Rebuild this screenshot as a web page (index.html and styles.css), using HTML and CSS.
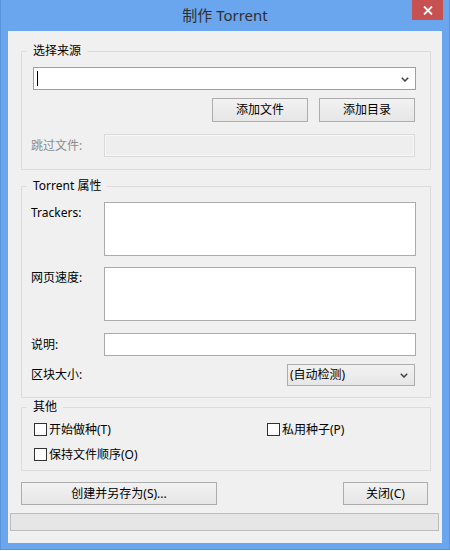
FILE: index.html
```html
<!DOCTYPE html>
<html>
<head>
<meta charset="utf-8">
<title>制作 Torrent</title>
<link rel="stylesheet" href="styles.css">
</head>
<body>
<div class="window">
  <div class="titlebar">
    <div class="title">制作 Torrent</div>
    <div class="close"><svg width="10" height="9" viewBox="0 0 10 9"><path d="M1 0.5 L9 8.5 M9 0.5 L1 8.5" stroke="#fff" stroke-width="1.8" fill="none"/></svg></div>
  </div>
  <div class="client">
    <fieldset class="group g-source">
      <legend>选择来源</legend>
      <div class="combo"><span class="caret"></span><svg class="arrow" width="8" height="5" viewBox="0 0 8 5"><path d="M0.8 0.8 L4 4 L7.2 0.8" stroke="#404040" stroke-width="1.5" fill="none"/></svg></div>
      <div class="btn-row"><button class="btn btn-add">添加文件</button><button class="btn btn-add">添加目录</button></div>
      <div class="field-row skip"><span class="label disabled">跳过文件:</span><div class="textbox disabled-box"></div></div>
    </fieldset>

    <fieldset class="group g-props">
      <legend>Torrent 属性</legend>
      <div class="field-row top"><span class="label label-top">Trackers:</span><div class="textbox area"></div></div>
      <div class="field-row top gap11"><span class="label label-top">网页速度:</span><div class="textbox area"></div></div>
      <div class="field-row gap12"><span class="label">说明:</span><div class="textbox line"></div></div>
      <div class="field-row gap8"><span class="label">区块大小:</span><div class="select"><span>(自动检测)</span><svg class="arrow" width="8" height="5" viewBox="0 0 8 5"><path d="M0.8 0.8 L4 4 L7.2 0.8" stroke="#404040" stroke-width="1.5" fill="none"/></svg></div></div>
    </fieldset>

    <fieldset class="group g-other">
      <legend>其他</legend>
      <div class="checks">
        <div class="check"><span class="box"></span><span>开始做种(T)</span></div>
        <div class="check"><span class="box"></span><span>私用种子(P)</span></div>
        <div class="check"><span class="box"></span><span>保持文件顺序(O)</span></div>
      </div>
    </fieldset>

    <div class="actions">
      <button class="btn btn-create">创建并另存为(S)...</button>
      <button class="btn btn-close">关闭(C)</button>
    </div>
    <div class="statusbar"></div>
  </div>
</div>
</body>
</html>
```

FILE: styles.css
```css
* { box-sizing: border-box; }
html, body { margin: 0; padding: 0; background: #ffffff; }
body {
  width: 450px;
  height: 551px;
  overflow: hidden;
  font-family: "Noto Sans", "Noto Sans CJK SC", sans-serif;
  font-size: 12px;
  color: #000;
}
.window {
  width: 450px;
  height: 550px;
  background: #6AA6EE;
  border: 1px solid #5A92DC;
  border-top: none;
  padding: 0 7px 6px 7px;
  display: flex;
  flex-direction: column;
  position: relative;
}
.titlebar {
  height: 31px;
  display: flex;
  align-items: center;
  justify-content: center;
}
.title {
  font-family: "Noto Sans", "Noto Sans CJK SC", sans-serif;
  font-size: 15px;
  line-height: 20px;
  color: #2f2f2f;
  margin-top: -1px;
}
.close {
  position: absolute;
  top: 0;
  right: 6px;
  width: 31px;
  height: 20px;
  background: #C75050;
  display: flex;
  align-items: center;
  justify-content: center;
}
.client {
  flex: 1;
  background: #F0F0F0;
  padding: 12px 11px 12px 13px;
  display: flex;
  flex-direction: column;
}
.group {
  margin: 0;
  border: 1px solid #DCDCDC;
  padding: 8px 14px 11px 9px;
  min-width: 0;
}
.group legend {
  padding: 0 6px;
  margin-left: -4px;
  line-height: 16px;
}
.g-source { padding-bottom: 12px; }
.g-props { margin-top: 8px; }
.g-other { margin-top: 1px; padding-top: 2px; padding-bottom: 3px; }

.combo {
  height: 23px;
  margin-left: 2px;
  border: 1px solid #7EA6D3;
  background: #fff;
  position: relative;
  display: flex;
  align-items: center;
  padding-left: 3px;
}
.caret { width: 1px; height: 15px; background: #000; }
.arrow { position: absolute; right: 6px; top: 50%; margin-top: -2px; }

.btn {
  font-family: inherit;
  font-size: 12px;
  color: #000;
  border: 1px solid #ACACAC;
  background: linear-gradient(#F2F2F2, #E6E6E6);
  padding: 0;
  margin: 0;
  line-height: 16px;
}
.btn-row {
  display: flex;
  justify-content: flex-end;
  gap: 11px;
  margin-top: 8px;
  margin-right: 1px;
}
.btn-add { width: 96px; height: 24px; }

.field-row { display: flex; align-items: center; }
.field-row.top { align-items: flex-start; }
.skip { margin-top: 12px; }
.gap11 { margin-top: 11px; }
.gap12 { margin-top: 12px; }
.gap8 { margin-top: 8px; }
.label { width: 73px; flex: none; line-height: 16px; }
.label-top { padding-top: 3px; }
.disabled { color: #8C8C8C; }
.textbox { flex: 1; background: #fff; border: 1px solid #ABABAB; }
.disabled-box {
  height: 23px;
  margin-right: 1px;
  background: #EEEEEE;
  border: 1px solid #D9D9D9;
  box-shadow: inset 0 0 0 1px #F7F7F7;
}
.area { height: 54px; }
.line { height: 23px; }
.select {
  margin-left: auto;
  margin-right: 1px;
  width: 128px;
  height: 22px;
  border: 1px solid #ACACAC;
  background: linear-gradient(#F2F2F2, #E6E6E6);
  display: flex;
  align-items: center;
  padding-left: 2px;
  position: relative;
  line-height: 16px;
}
.select .arrow { right: 6px; }

.checks {
  display: grid;
  grid-template-columns: 233px auto;
  grid-auto-rows: 25px;
  padding-left: 3px;
}
.check { display: flex; align-items: center; line-height: 16px; }
.box {
  width: 13px;
  height: 13px;
  border: 1px solid #333;
  background: #fff;
  margin-right: 2px;
  flex: none;
}

.actions {
  display: flex;
  justify-content: space-between;
  margin-top: 11px;
  margin-right: 3px;
}
.btn-create { width: 196px; height: 23px; }
.btn-close { width: 85px; height: 23px; }

.statusbar {
  margin-top: 8px;
  margin-left: -11px;
  margin-right: -8px;
  height: 18px;
  background: #E6E6E6;
  border: 1px solid #BCBCBC;
}
```
